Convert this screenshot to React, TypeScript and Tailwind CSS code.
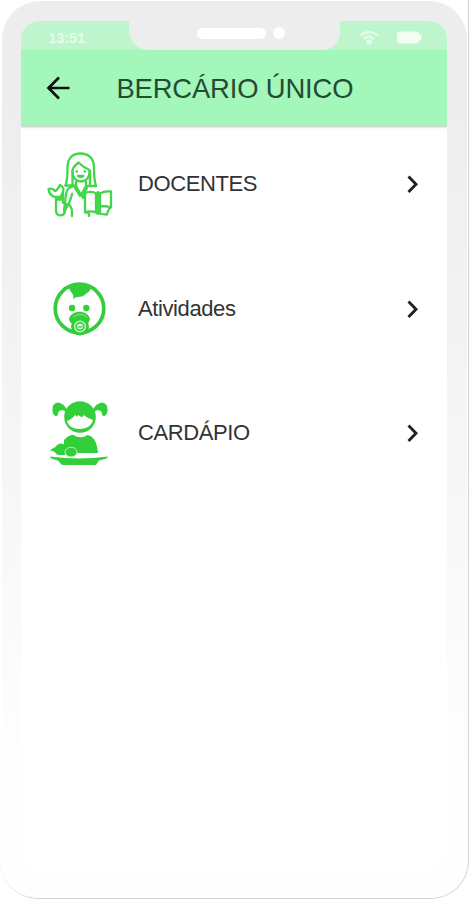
import type { ReactNode } from "react"

function TeacherIcon() {
    return (
        <svg className="h-[66px] w-[66px]" viewBox="0 0 66 66" fill="none" stroke="#43d64b" strokeWidth="2.3" strokeLinecap="round" strokeLinejoin="round">
            {/* hair and face */}
            <path d="M18.500 34.500c2-5 2-11 2-18C20.500 7 26 2.500 33.500 2.500S47 7 47 16.500c0 7 0 13 2 18.500" />
            <path d="M18.500 34.500h8.500M41 35h8M25.500 34V20M43 35V20" />
            <path d="M25.500 19c1-3 3-5 6-7.500 3 3 6 5.500 11 7.500v2c0 6-4 9.500-8.500 9.500s-8.500-3.500-8.500-9.500z" />
            <path d="M29.500 20.500h.5M37.500 20.500h.5M31 25c1.500 1.500 4 1.500 5.500 0z" />
            {/* collar and body */}
            <path d="M29 31v4l5 9 5-9v-4M28 37l5 8M40 37l-5 8" />
            <path d="M27 35c-5 1-7 3-8 8l-2 17M25 43c-1 5-3 10-7 16M22 53c1 2 3 4 3 7v5" />
            {/* raised hand */}
            <path d="M8 46c-4-1-6-4-6.500-8 3-1 5 0 6.500 2 2 0 3-3 5-6 3 1 4 4 3 7-1 2-2 3-2 5zM9 46v13c0 7 8 7 9 1l2-7M9 48.500h7M16 42v10" />
            {/* open book */}
            <path d="M38 42c4-1.500 8-1.500 11 .5v19c-3-1.500-7-1.500-11-.5zM53 42.500c3-2 7-2.500 11-2v16c-3 1-3 4-4 7-3 0-5 0-7-1zM38 61.500h4v3.500M36 41v6M54 55c3 0 5 0 9 1" />
            <path d="M51 42v20" strokeWidth="4" />
        </svg>
    )
}

function BabyIcon() {
    return (
        <svg className="h-[66px] w-[66px]" viewBox="0 0 66 66" fill="none">
            <circle cx="32.500" cy="32.500" r="24.300" stroke="#33cf3a" strokeWidth="3.700" />
            <path d="M22 10c6-4 16-4 22 1 0 3-2 5-4 6-3 3-6 4-9 4-3 0-3 1-5 2 1-3 0-4-1-6-2-2-3-4-3-7z" fill="#33cf3a" />
            <circle cx="25" cy="32" r="3.200" fill="#33cf3a" />
            <circle cx="39.300" cy="32" r="3.200" fill="#33cf3a" />
            <path d="M22 42.500c3-9 18-9 21 0 0 3-2 5-4 5-3-4-9-4-13 0-2 0-4-2-4-5z" fill="#33cf3a" />
            <path d="M26 41.500c3-4 11-4 14 0" stroke="#8be890" strokeWidth="1" />
            <circle cx="33" cy="50.500" r="7.500" fill="#d4f7d6" stroke="#33cf3a" strokeWidth="3" />
            <circle cx="33" cy="50.500" r="3.800" stroke="#33cf3a" strokeWidth="1.700" />
            <path d="M31.500 50.500c1 1 2.500 1 3.500-.5" stroke="#33cf3a" strokeWidth="1.300" />
        </svg>
    )
}

function MealIcon() {
    return (
        <svg className="h-[66px] w-[66px]" viewBox="0 0 66 66" fill="#33cf3a">
            {/* head with pigtails */}
            <path d="M20 10C16 1 5 0 5.500 10c0 4 2 6 4 6 2 0 1-4 3-5s4-1 7 1zM46 10c4-9 15-10 14.500 0 0 4-2 6-4 6-2 0-1-4-3-5s-4-1-7 1z" />
            <circle cx="33" cy="17" r="15.800" />
            <path d="M20 21c3-1 6-3 8-6l2 2 1-2c4 3 5 2 6 0 3 3 7 4 9 5-1 5-6 9-13 9s-12-3-13-8z" fill="#fff" />
            {/* body */}
            <path d="M27 35c3 3 10 3 13 0 7 1 10 7 11 18H17V40c3-3 5-5 10-5z" />
            <path d="M8 48c2-5 8-6 10-2v9H12c-3 0-5-3-4-7z" />
            <path d="M3 50l7-4v7z" />
            <ellipse cx="24" cy="52" rx="6" ry="4.800" stroke="#b5efb8" strokeWidth="1" />
            {/* plate */}
            <path d="M3 56.500c20 2.500 39 2.500 58 0 0 2-5 3-9 4l-3 4.500H15l-4-4.500c-4-1-8-2-8-4z" />
        </svg>
    )
}

function MenuItem({ icon, label }: { icon: ReactNode; label: string }) {
    return (
        <a href="#" className="flex h-[124.500px] items-center pl-[26px] pr-[26px]">
            {icon}
            <span className="ml-[25.500px] flex-1 text-[22px] leading-7 tracking-[-0.400px] text-[#333]">{label}</span>
            <svg className="h-5 w-4" viewBox="0 0 16 20" fill="none" stroke="#222" strokeWidth="2.900">
                <path d="M3.500 2.500l7.500 7.700-7.500 7.700" />
            </svg>
        </a>
    )
}

export default function App() {
    return (
        <div className="h-[900px] w-[469px] overflow-hidden bg-white font-['Liberation_Sans',Arial,sans-serif]">
            <div className="h-[899px] rounded-b-[38px] border-b border-r border-[#d2d2d2] pl-0.5 pr-px pt-px">
                <div className="h-full rounded-[38px] bg-linear-to-b from-[#ededed] from-10% via-[#f6f6f6] via-50% to-[#fefefe] to-85% pl-[18.500px] pr-5 pt-5">
                    <div className="h-[850px] overflow-hidden rounded-t-[18px] rounded-b-[22px] bg-white">
                        <div className="flex h-[29px] bg-[#bef5cd]">
                            <div className="w-[108.500px] pl-[28px] pt-[8px] text-[14px] font-bold leading-[18px] tracking-[0.200px] text-[#e6fded]">13:51</div>
                            <div className="flex w-[211px] justify-center rounded-bl-[20px] rounded-br-[18px] bg-[#ededed] pl-[12px]">
                                <div className="mt-[7px] h-[11px] w-[69px] rounded-full bg-white"></div>
                                <div className="ml-[7px] mt-[6px] h-3 w-3 rounded-full bg-white"></div>
                            </div>
                            <div className="flex flex-1 items-start pl-[19px] pt-[9px]">
                                <svg className="h-4 w-5" viewBox="0 0 20 16" fill="none" stroke="#e3fceb" strokeWidth="2.400">
                                    <path d="M1.500 5.500c5-4.500 12-4.500 17 0M5 9c3-3 7-3 10 0" />
                                    <circle cx="10" cy="12" r="1.600" fill="#e3fceb" />
                                </svg>
                                <svg className="ml-[17px] h-4 w-[26px]" viewBox="0 0 26 16" fill="#f3fff5">
                                    <rect x="1" y="1.500" width="22" height="12" rx="2.500" />
                                    <rect x="23" y="4.500" width="2.500" height="6" rx="1" />
                                </svg>
                            </div>
                        </div>
                        <div className="flex h-[76px] items-center bg-[#a3f7bb] shadow-[0_1px_2px_#bbb]">
                            <svg className="ml-[25px] h-6 w-6" viewBox="0 0 24 24" fill="none" stroke="#111" strokeWidth="2.700">
                                <path d="M23.500 12H3M13 1.500l-10.500 10.500 10.500 10.500" />
                            </svg>
                            <h1 className="ml-[47px] mt-px whitespace-nowrap text-[27.400px] leading-8 tracking-[-0.150px] text-[#244c30]">BERCÁRIO ÚNICO</h1>
                        </div>
                        <div className="-mt-1">
                            <MenuItem icon={<TeacherIcon />} label="DOCENTES" />
                            <MenuItem icon={<BabyIcon />} label="Atividades" />
                            <MenuItem icon={<MealIcon />} label="CARDÁPIO" />
                        </div>
                    </div>
                </div>
            </div>
        </div>
    )
}
